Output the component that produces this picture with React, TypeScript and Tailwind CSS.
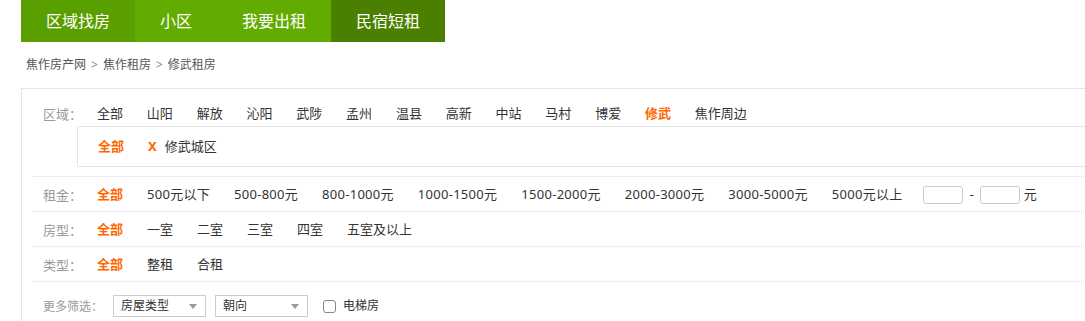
import React from "react";

const FONT = { fontFamily: '"Noto Sans", "Noto Sans CJK SC", sans-serif' };
const CJK = { fontFamily: '"Noto Sans CJK SC", sans-serif' };

function Row({ label, children, last, tight }: { label: string; children: React.ReactNode; last?: boolean; tight?: boolean }) {
  return (
    <div className={`ml-[11px] flex h-[35px] items-center pl-[10px] pt-[1px] ${last ? "" : "border-b border-dotted border-[#ddd]"}`}>
      <div className="w-[54px] shrink-0 text-[13px] text-[#999]" style={CJK}>{label}</div>
      <div className={`flex items-center gap-[24px] text-[13px] text-[#333] ${tight ? "tracking-[0.28px]" : ""}`}>{children}</div>
    </div>
  );
}

const On = ({ children }: { children: React.ReactNode }) => (
  <span className="font-bold tracking-normal text-[#ff6600]">{children}</span>
);

function Select({ text }: { text: string }) {
  return (
    <div className="flex h-[22px] w-[93px] items-center justify-between border border-[#ccc] pl-[7px] pr-[8px] text-[12px] text-[#333]">
      <span>{text}</span>
      <svg width="8" height="5" viewBox="0 0 8 5"><path d="M0 0h8L4 5z" fill="#999" /></svg>
    </div>
  );
}

export default function App() {
  const areas = ["山阳", "解放", "沁阳", "武陟", "孟州", "温县", "高新", "中站", "马村", "博爱"];
  const prices = ["500元以下", "500-800元", "800-1000元", "1000-1500元", "1500-2000元", "2000-3000元", "3000-5000元", "5000元以上"];
  return (
    <div className="w-[1085px] h-[321px] overflow-hidden bg-white leading-none" style={FONT}>
      <div className="ml-[21px] flex h-[42px] w-[424px] bg-[#62ab00] text-[16px] text-white">
        <div className="flex items-center bg-[#5a9f00] px-[25px]">区域找房</div>
        <div className="flex items-center px-[25px]">小区</div>
        <div className="flex items-center px-[25px]">我要出租</div>
        <div className="flex items-center bg-[#4a7f00] px-[25px]">民宿短租</div>
      </div>
      <div className="ml-[26px] mt-[17px] text-[12px] text-[#555]">
        焦作房产网<span className="mx-[5px] text-[#888]">&gt;</span>焦作租房<span className="mx-[5px] text-[#888]">&gt;</span>修武租房
      </div>
      <div className="ml-[21px] mt-[17px] w-[1100px] border border-[#e5e5e5]">
        <div className="ml-[11px] border-b border-dotted border-[#ddd] pb-[9px]">
          <div className="flex h-[37px] items-center pl-[10px] pt-[12px]">
            <div className="w-[54px] shrink-0 text-[13px] text-[#999]" style={CJK}>区域：</div>
            <div className="flex items-center gap-[23.8px] text-[13px] text-[#333]">
              <span>全部</span>
              {areas.map((a) => (
                <span key={a}>{a}</span>
              ))}
              <span className="font-bold text-[#ff6600]">修武</span>
              <span>焦作周边</span>
            </div>
          </div>
          <div className="ml-[44px] flex h-[41px] items-center border border-[#e5e5e5] pl-[20px] text-[13px]">
            <On>全部</On>
            <span className="ml-[24px] font-bold text-[#ff6600]">X</span>
            <span className="ml-[8px] text-[#333]">修武城区</span>
          </div>
        </div>
        <Row label="租金：" tight>
          <On>全部</On>
          {prices.map((p) => (
            <span key={p}>{p}</span>
          ))}
          <span className="-ml-[3px] flex items-center gap-[6px] tracking-normal">
            <span className="h-[18px] w-[40px] rounded-[3px] border border-[#ccc]" />
            <span>-</span>
            <span className="h-[18px] w-[40px] rounded-[3px] border border-[#ccc]" />
            <span className="-ml-[2px]">元</span>
          </span>
        </Row>
        <Row label="房型：">
          <On>全部</On>
          <span>一室</span>
          <span>二室</span>
          <span>三室</span>
          <span>四室</span>
          <span>五室及以上</span>
        </Row>
        <Row label="类型：">
          <On>全部</On>
          <span>整租</span>
          <span>合租</span>
        </Row>
        <div className="ml-[11px] flex h-[46px] items-center pl-[10px] pt-[2px]">
          <div className="w-[70px] shrink-0 text-[12px] text-[#999]" style={CJK}>更多筛选：</div>
          <Select text="房屋类型" />
          <div className="ml-[9px]">
            <Select text="朝向" />
          </div>
          <span className="ml-[15px] h-[13px] w-[13px] rounded-[3px] border border-[#888]" />
          <span className="ml-[7px] text-[12px] text-[#333]">电梯房</span>
        </div>
      </div>
    </div>
  );
}
